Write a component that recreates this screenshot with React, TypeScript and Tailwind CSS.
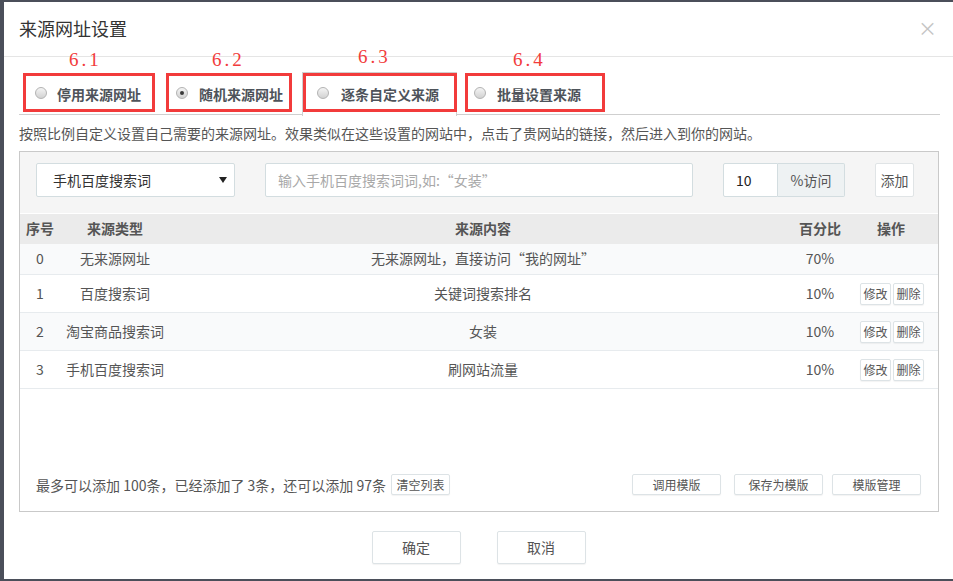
import React from "react";

const font = { fontFamily: '"Noto Sans CJK SC", "Noto Sans", sans-serif' };

const rows = [
    { id: 0, type: "无来源网址", content: "无来源网址，直接访问“我的网址”", pct: "70%", edit: false },
    { id: 1, type: "百度搜索词", content: "关键词搜索排名", pct: "10%", edit: true },
    { id: 2, type: "淘宝商品搜索词", content: "女装", pct: "10%", edit: true },
    { id: 3, type: "手机百度搜索词", content: "刷网站流量", pct: "10%", edit: true },
];

const Radio = ({ checked }: { checked?: boolean }) => (
    <span className="flex h-[12px] w-[12px] shrink-0 items-center justify-center rounded-full border border-[#b3b3b3] bg-gradient-to-b from-[#f4f4f4] to-[#d2d2d2]">
        {checked && <span className="h-[4px] w-[4px] rounded-full bg-[#3a3a3a]" />}
    </span>
);

// red annotation over each tab
const Label = ({ text, left }: { text: string; left: number }) => (
    <span
        className="absolute top-[-26px] text-[19px] font-normal leading-[20px] tracking-[3px] text-[#f23b3b]"
        style={{ left, fontFamily: '"Liberation Serif", serif' }}
    >
        {text}
    </span>
);

const SmallBtn = ({ children, className = "" }: { children: React.ReactNode; className?: string }) => (
    <button
        className={`flex items-center justify-center rounded-[2px] border border-[#dde3e6] bg-white text-[12px] leading-none text-[#555] shadow-[0_1px_1px_rgba(0,0,0,0.05)] ${className}`}
    >
        {children}
    </button>
);

export default function App() {
    return (
        <div className="min-h-[581px] w-[953px] bg-[#4b4f5a] pb-[2px] pl-[4px] pt-[2px]" style={font}>
            <div className="flex h-[577px] w-[949px] flex-col bg-white">
                {/* Header */}
                <div className="flex h-[55px] items-center justify-between border-b border-[#e5e5e5] pb-[2px] pl-[15px] pr-[16px]">
                    <span className="text-[18px] leading-[18px] text-[#333]">来源网址设置</span>
                    <span className="mb-[2px] text-[19px] leading-none text-[#c4c4c4]">×</span>
                </div>

                <div className="flex flex-1 flex-col px-[15px]">
                    {/* Tabs */}
                    <div className="mt-[15px] flex h-[43px] w-[921px] items-start border-b border-[#cfcfcf] text-[14px] font-bold leading-[14px] text-[#4e535a]">
                        <div className="relative ml-[4px] mt-[1px] flex h-[39px] w-[132px] items-center border-[3px] border-[#f23b3b] pl-[9px]">
                            <Label text="6.1" left={43} />
                            <Radio />
                            <span className="ml-[10px] mt-[3px]">停用来源网址</span>
                        </div>
                        <div className="relative ml-[11px] mt-[1px] flex h-[39px] w-[126px] items-center border-[3px] border-[#f23b3b] pl-[7px]">
                            <Label text="6.2" left={43} />
                            <Radio checked />
                            <span className="ml-[11px] mt-[3px]">随机来源网址</span>
                        </div>
                        <div className="relative ml-[10px] h-[44px] w-[155px] border-x border-t border-[#cfcfcf] bg-white">
                            <Label text="6.3" left={55} />
                            <div className="flex h-[39px] w-[154px] items-center border-[3px] border-[#f23b3b] pl-[11px]">
                                <Radio />
                                <span className="ml-[12px] mt-[3px]">逐条自定义来源</span>
                            </div>
                        </div>
                        <div className="relative ml-[8px] mt-[1px] flex h-[39px] w-[140px] items-center border-[3px] border-[#f23b3b] pl-[6px]">
                            <Label text="6.4" left={45} />
                            <Radio />
                            <span className="ml-[11px] mt-[3px]">批量设置来源</span>
                        </div>
                    </div>

                    <p className="mt-[8px] text-[14px] leading-[20px] text-[#555]">
                        按照比例自定义设置自己需要的来源网址。效果类似在这些设置的网站中，点击了贵网站的链接，然后进入到你的网站。
                    </p>

                    {/* Panel */}
                    <div className="mt-[8px] flex h-[361px] w-[920px] flex-col border border-[#c9c9c9] text-[14px] text-[#555]">
                        <div className="flex h-[61px] items-start bg-[#f5f5f5] pl-[16px] pt-[11px]">
                            <div className="flex h-[34px] w-[199px] items-center justify-between rounded-[2px] border border-[#d3dde0] bg-white pl-[16px] pr-[7px] text-[#333]">
                                <span>手机百度搜索词</span>
                                <svg width="8" height="8" viewBox="0 0 8 8">
                                    <path d="M0 1h8L4 7z" fill="#222" />
                                </svg>
                            </div>
                            <div className="ml-[30px] flex h-[34px] w-[428px] items-center rounded-[2px] border border-[#d3dde0] bg-white pl-[12px] text-[#a8a8a8]">
                                输入手机百度搜索词词,如:“女装”
                            </div>
                            <div className="ml-[30px] flex h-[34px]">
                                <div className="flex w-[55px] items-center rounded-l-[2px] border border-[#d3dde0] bg-white pl-[12px] text-[#222]">
                                    10
                                </div>
                                <div className="flex w-[67px] items-center justify-center rounded-r-[2px] border border-l-0 border-[#d3dde0] bg-[#eef2f3] text-[#555]">
                                    %访问
                                </div>
                            </div>
                            <div className="ml-[30px] flex h-[34px] w-[39px] items-center justify-center rounded-[2px] border border-[#e0e4e6] bg-white text-[#555]">
                                添加
                            </div>
                        </div>

                        {/* Table */}
                        <div className="grid h-[31px] grid-cols-[40px_110px_626px_48px_94px] items-center border-t border-white bg-[#ebebeb] pb-[2px] font-bold text-[#555]">
                            <span className="text-center">序号</span>
                            <span className="text-center">来源类型</span>
                            <span className="text-center">来源内容</span>
                            <span className="text-center">百分比</span>
                            <span className="pl-[33px]">操作</span>
                        </div>
                        {rows.map((r, i) => (
                            <div
                                key={r.id}
                                className={`grid grid-cols-[40px_110px_626px_48px_94px] items-center border-b border-[#e7ebee] ${
                                    i === 0 ? "h-[31px] pb-[2px]" : "h-[38px]"
                                } ${i % 2 === 0 ? "bg-[#f9fafb]" : "bg-white"}`}
                            >
                                <span className="text-center">{r.id}</span>
                                <span className="text-center">{r.type}</span>
                                <span className="text-center">{r.content}</span>
                                <span className="text-center">{r.pct}</span>
                                <span className="flex gap-[2px] pl-[16px]">
                                    {r.edit && (
                                        <>
                                            <SmallBtn className="h-[22px] w-[31px]">修改</SmallBtn>
                                            <SmallBtn className="h-[22px] w-[31px]">删除</SmallBtn>
                                        </>
                                    )}
                                </span>
                            </div>
                        ))}

                        {/* Footer */}
                        <div className="mt-auto flex items-center pb-[16px] pl-[16px] pr-[17px]">
                            <span className="leading-[20px]">最多可以添加 100条，已经添加了 3条，还可以添加 97条</span>
                            <SmallBtn className="ml-[5px] h-[21px] w-[59px]">清空列表</SmallBtn>
                            <SmallBtn className="ml-auto h-[21px] w-[89px]">调用模版</SmallBtn>
                            <SmallBtn className="ml-[13px] h-[21px] w-[89px]">保存为模版</SmallBtn>
                            <SmallBtn className="ml-[9px] h-[21px] w-[89px]">模版管理</SmallBtn>
                        </div>
                    </div>

                    <div className="mt-[19px] flex justify-center gap-[36px] text-[14px] text-[#555]">
                        <button className="flex h-[33px] w-[89px] items-center justify-center rounded-[2px] border border-[#dde3e6] bg-white shadow-[0_1px_1px_rgba(0,0,0,0.05)]">
                            确定
                        </button>
                        <button className="flex h-[33px] w-[89px] items-center justify-center rounded-[2px] border border-[#dde3e6] bg-white shadow-[0_1px_1px_rgba(0,0,0,0.05)]">
                            取消
                        </button>
                    </div>
                </div>
            </div>
        </div>
    );
}
